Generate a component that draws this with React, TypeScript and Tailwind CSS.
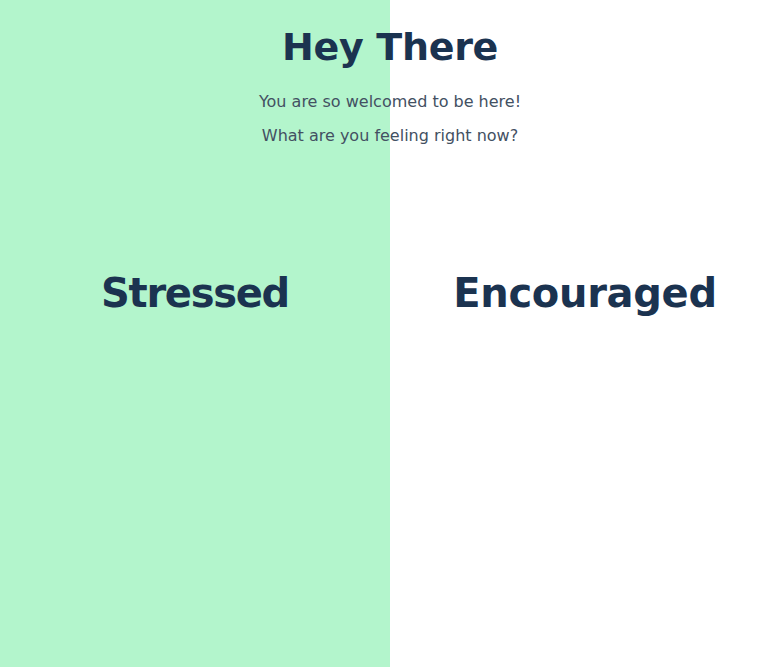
import React from 'react';

const moods = [
  { name: 'Stressed', bg: 'bg-[#b3f5cc]', track: 'tracking-[-1.3px]' },
  { name: 'Encouraged', bg: 'bg-white', track: 'tracking-[-0.3px]' },
];

export default function App() {
  return (
    <div className="grid h-[667px] w-full overflow-hidden bg-white font-['DejaVu_Sans',sans-serif] text-[#1b3350]">
      {/* background halves */}
      <div className="col-start-1 row-start-1 grid grid-cols-2">
        {moods.map((mood) => (
          <div key={mood.name} className={`flex justify-center pt-[268px] ${mood.bg}`}>
            <h2 className={`text-[40px] font-bold leading-[50px] ${mood.track}`}>{mood.name}</h2>
          </div>
        ))}
      </div>

      {/* header sits on top of both halves */}
      <div className="col-start-1 row-start-1 flex flex-col items-center self-start pt-[23px]">
        <h1 className="text-[38px] font-bold leading-[48px] tracking-[-0.3px]">Hey There</h1>
        <p className="mt-[14px] text-[16px] leading-[34px] text-[#435062]">You are so welcomed to be here!</p>
        <p className="text-[16px] leading-[34px] text-[#435062]">What are you feeling right now?</p>
      </div>
    </div>
  );
}
